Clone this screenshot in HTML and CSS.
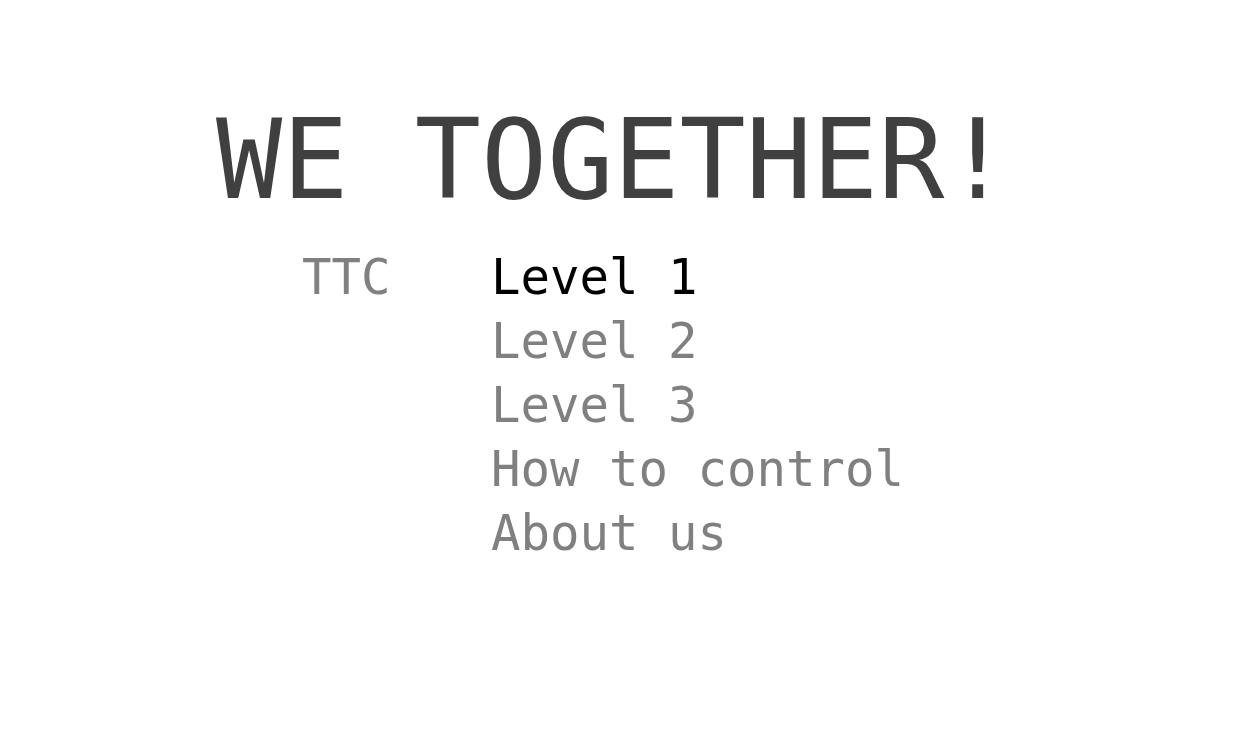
FILE: index.html
```html
<!DOCTYPE html>
<html>
<head>
<meta charset="utf-8">
<link rel="stylesheet" href="styles.css">
</head>
<body>
<main class="screen">
  <h1 class="title">WE TOGETHER!</h1>
  <div class="menu-row">
    <div class="brand">TTC</div>
    <ul class="menu">
      <li class="item active">Level 1</li>
      <li class="item">Level 2</li>
      <li class="item">Level 3</li>
      <li class="item">How to control</li>
      <li class="item">About us</li>
    </ul>
  </div>
</main>
</body>
</html>
```
FILE: styles.css
```css
html, body {
  margin: 0;
  padding: 0;
  background: #ffffff;
}
body {
  width: 1254px;
  height: 730px;
  overflow: hidden;
  font-family: "DejaVu Sans Mono", "Liberation Mono", monospace;
}
.screen {
  padding: 105px 0 0 216px;
  display: flex;
  flex-direction: column;
}
.title {
  margin: 0;
  font-size: 110px;
  line-height: 110px;
  font-weight: normal;
  color: #404040;
  white-space: pre;
}
.menu-row {
  display: flex;
  margin-top: 31px;
  padding-left: 86px;
}
.brand {
  width: 189px;
  font-size: 49px;
  line-height: 64px;
  color: #808080;
}
.menu {
  list-style: none;
  margin: 0;
  padding: 0;
}
.item {
  font-size: 49px;
  line-height: 64px;
  color: #808080;
  white-space: pre;
}
.item.active {
  color: #000000;
}
```
